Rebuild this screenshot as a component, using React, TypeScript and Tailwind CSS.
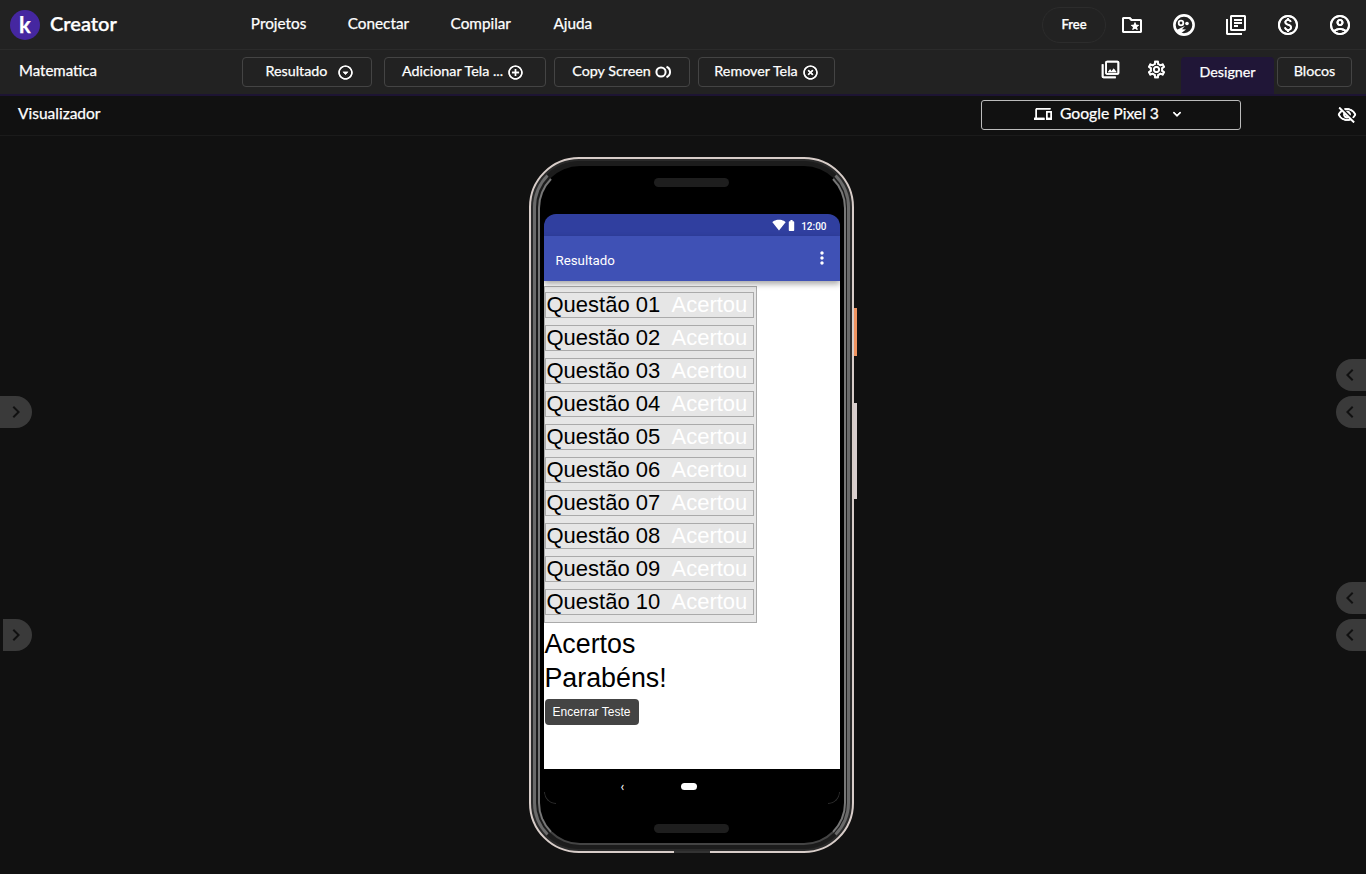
import { ReactNode } from "react";
import {
  MdOutlineAddCircleOutline,
  MdOutlineArrowDropDownCircle,
  MdOutlineAccountCircle,
  MdOutlineDevices,
  MdOutlineFolderSpecial,
  MdOutlineHighlightOff,
  MdOutlineLibraryBooks,
  MdOutlinePaid,
  MdOutlinePhotoLibrary,
  MdOutlineSettings,
  MdOutlineVisibilityOff,
  MdExpandMore,
  MdChevronLeft,
  MdChevronRight,
  MdSignalWifi4Bar,
  MdBatteryStd,
  MdMoreVert,
} from "react-icons/md";

const uiFont = "font-['Lato','Open_Sans',sans-serif]";
const arial = "font-['Liberation_Sans',Arial,sans-serif]";
const heavy = "[-webkit-text-stroke:0.25px_white]";
const thick = "[filter:drop-shadow(0_0_0.7px_white)]";

const questoes = ["01", "02", "03", "04", "05", "06", "07", "08", "09", "10"];

function ToolButton({ w, ml, extra, children }: { w: string; ml: string; extra?: string; children: ReactNode }) {
  return (
    <button className={`${w} ${ml} ${extra ?? ""} h-[30px] pb-[2px] flex items-center justify-center gap-1 rounded border border-[#444] text-[14.3px] text-white`}>
      {children}
    </button>
  );
}

function CopyIcon() {
  return (
    <svg width="17" height="14" viewBox="0 0 17 14" fill="none" stroke="white" strokeWidth="2" className="mt-[2px]">
      <circle cx="6" cy="7" r="4.6" />
      <path d="M11.5 1.8a5.6 5.6 0 0 1 0 10.4" />
    </svg>
  );
}

function FaceIcon() {
  return (
    <svg width="24" height="24" viewBox="0 0 24 24" fill="none">
      <circle cx="12" cy="12" r="9.6" stroke="white" strokeWidth="2.6" />
      <circle cx="9" cy="10" r="2.3" stroke="white" strokeWidth="1.8" />
      <circle cx="15" cy="10.5" r="1.8" fill="white" />
      <path d="M4.5 17l8.5-4-3 3.2 4 .3-6 4.5z" fill="white" />
    </svg>
  );
}

function SideTab({ side, pos, shift }: { side: "left" | "right"; pos: string; shift?: string }) {
  if (side === "left") {
    return (
      <div className={`absolute ${pos} ${shift ?? "left-0 w-[32px]"} h-[32px] rounded-r-2xl bg-[#3a3a3a] flex items-center justify-end pr-1 text-[#111]`}>
        <MdChevronRight size={24} />
      </div>
    );
  }
  return (
    <div className={`absolute ${pos} right-0 w-[30px] h-[32px] rounded-l-2xl bg-[#3a3a3a] flex items-center pl-0.5 text-[#111]`}>
      <MdChevronLeft size={24} />
    </div>
  );
}

function Phone() {
  return (
    <div className="relative w-[325px] h-[696px]">
      {/* botoes laterais */}
      <div className="absolute left-[325px] top-[151px] w-[3px] h-[48px] bg-[#f0935f]" />
      <div className="absolute left-[325px] top-[246px] w-[3px] h-[96px] bg-[#d9cfcf]" />
      <div className="absolute left-[145px] top-[694px] w-[36px] h-[2px] bg-[#333]" />

      <div className="w-full h-full rounded-[50px] border-[2.5px] border-[#d8cdc9] bg-[#2a2a2a] p-[2px]">
        <div className="w-full h-full rounded-[46px] border-[3px] border-x-[#6a6a6a] border-y-[#1c1c1c] bg-[#1c1c1c] p-[1.5px]">
          <div className="w-full h-full rounded-[42px] border-2 border-x-[#777] border-t-black border-b-[#444] bg-black flex flex-col items-center">
            <div className="mt-[10px] w-[75px] h-[9px] rounded-full bg-[#1e1e1e]" />
            <div className="relative mt-[27px] w-[296px] h-[590px] rounded-[12px] overflow-hidden flex flex-col">
              <div className="h-[22px] shrink-0 bg-[#303f9f] flex items-center justify-end pr-[13px] text-white">
                <MdSignalWifi4Bar size={14} className="mt-[1px]" />
                <MdBatteryStd size={13} className="-mx-[1px] mt-[1px]" />
                <span className="ml-[4px] mt-[3px] text-[10px] font-medium font-['Roboto',sans-serif]">12:00</span>
              </div>
              <div className="h-[45px] shrink-0 bg-[#3f51b5] flex items-center justify-between pl-[12px] pr-[8px] text-white shadow-[0_3px_6px_rgba(0,0,0,0.35)] z-10">
                <span className="text-[13.3px] mt-[5px] font-['Roboto',sans-serif]">Resultado</span>
                <MdMoreVert size={20} className="mb-[1px]" />
              </div>
              <div className={`h-[488px] shrink-0 bg-white ${arial}`}>
                <div className="mt-[5px] w-[213px] h-[337px] border border-[#aaa] bg-[#e6e6e6] flex flex-col gap-[7px] pt-[5px]">
                  {questoes.map((q) => (
                    <div key={q} className="w-[209px] h-[26px] border border-[#aaa] flex items-center text-[22px] leading-none whitespace-nowrap">
                      <span className="w-[126px] pl-[1px] text-black">Questão {q}</span>
                      <span className="text-white">Acertou</span>
                    </div>
                  ))}
                </div>
                <div className="pl-[1px] mt-[4px] text-[26.8px] leading-[34px] text-black">Acertos</div>
                <div className="pl-[1px] text-[26.8px] leading-[34px] text-black">Parabéns!</div>
                <button className="ml-[1px] mt-[4px] w-[94px] h-[26px] rounded-sm bg-[#444] text-[12px] text-white">
                  Encerrar Teste
                </button>
              </div>
              <div className="flex-1 bg-black flex items-center text-white">
                <span className="ml-[77px] text-[14px] leading-none">‹</span>
                <div className="ml-[57px] w-[16px] h-[7px] rounded-full bg-white" />
              </div>
              <div className="absolute left-0 bottom-0 w-[12px] h-[12px] rounded-bl-[12px] border-l border-b border-[#2c2c2c]" />
              <div className="absolute right-0 bottom-0 w-[12px] h-[12px] rounded-br-[12px] border-r border-b border-[#2c2c2c]" />
            </div>
            <div className="mt-[20px] w-[75px] h-[9px] rounded-full bg-[#1e1e1e]" />
          </div>
        </div>
      </div>
    </div>
  );
}

export default function App() {
  return (
    <div className={`relative w-[1366px] h-[874px] overflow-hidden bg-[#111] text-white ${uiFont}`}>
      {/* barra superior */}
      <header className={`h-[50px] bg-[#222] border-b border-[#2b2b2b] flex items-center ${heavy}`}>
        <div className="ml-[10px] w-[30px] h-[30px] rounded-full bg-[#4527a0] flex items-center justify-center text-[22px] font-bold leading-none">
          k
        </div>
        <span className="ml-[10px] pb-[3px] text-[20px] font-semibold">Creator</span>
        <nav className="ml-[134px] flex gap-[41.5px] text-[15.3px] pb-[2px]">
          <span>Projetos</span>
          <span>Conectar</span>
          <span>Compilar</span>
          <span className="ml-[1px]">Ajuda</span>
        </nav>
        <div className="ml-auto flex items-center pr-[14px]">
          <div className="w-[64px] h-[36px] rounded-full border border-[#2c2c2c] flex items-center justify-center text-[13px] font-semibold">
            Free
          </div>
          <div className="ml-[14px] flex gap-[28px]">
            <MdOutlineFolderSpecial size={24} className={thick} />
            <FaceIcon />
            <MdOutlineLibraryBooks size={24} className={thick} />
            <MdOutlinePaid size={24} className={thick} />
            <MdOutlineAccountCircle size={24} className={thick} />
          </div>
        </div>
      </header>

      {/* barra de ferramentas */}
      <div className={`h-[46px] bg-[#222] border-b-2 border-[#1d1433] flex items-center ${heavy}`}>
        <span className="ml-[19px] w-[223px] text-[15px] pb-[3px]">Matematica</span>
        <ToolButton w="w-[130px]" ml="" extra="pl-[6px]">
          Resultado <MdOutlineArrowDropDownCircle size={17} className={`ml-1.5 mt-[2px] ${thick}`} />
        </ToolButton>
        <ToolButton w="w-[162px]" ml="ml-[12px]" extra="pr-[4px]">
          Adicionar Tela ... <MdOutlineAddCircleOutline size={17} className={`mt-[2px] ${thick}`} />
        </ToolButton>
        <ToolButton w="w-[136px]" ml="ml-[8px]">
          Copy Screen <CopyIcon />
        </ToolButton>
        <ToolButton w="w-[137px]" ml="ml-[8px]">
          Remover Tela <MdOutlineHighlightOff size={17} className={`mt-[2px] ${thick}`} />
        </ToolButton>
        <div className="ml-auto flex items-center self-end pr-[14px]">
          <MdOutlinePhotoLibrary size={21} className={`mb-[13px] ${thick}`} />
          <MdOutlineSettings size={21} className={`ml-[25px] mb-[13px] ${thick}`} />
          <div className="ml-[14px] w-[93px] h-[37px] pb-[8px] rounded-t bg-[#201637] flex items-center justify-center text-[14.3px]">
            Designer
          </div>
          <div className="ml-[3px] mb-[7px] w-[75px] h-[30px] pb-[2px] rounded border border-[#444] flex items-center justify-center text-[14.3px]">
            Blocos
          </div>
        </div>
      </div>

      {/* visualizador */}
      <div className={`h-[40px] pb-[2px] border-b border-[#1b1b1b] flex items-center ${heavy}`}>
        <span className="ml-[18px] w-[963px] text-[15.5px] pb-[1px]">Visualizador</span>
        <div className="w-[260px] h-[30px] pl-[52px] pb-[1px] rounded-[3px] border border-[#bbb] flex items-center text-[15.7px]">
          <MdOutlineDevices size={18} className={thick} />
          <span className="ml-[8px]">Google Pixel 3</span>
          <MdExpandMore size={16} className={`ml-[10px] ${thick}`} />
        </div>
        <MdOutlineVisibilityOff size={20} className={`ml-auto mr-[9px] ${thick}`} />
      </div>

      <main className="flex justify-center pt-[21px] pl-[17px]">
        <Phone />
      </main>

      <SideTab side="left" pos="top-[396px]" />
      <SideTab side="left" pos="top-[619px]" shift="left-[3px] w-[29px]" />
      <SideTab side="right" pos="top-[359px]" />
      <SideTab side="right" pos="top-[396px]" />
      <SideTab side="right" pos="top-[582px]" />
      <SideTab side="right" pos="top-[619px]" />
    </div>
  );
}
